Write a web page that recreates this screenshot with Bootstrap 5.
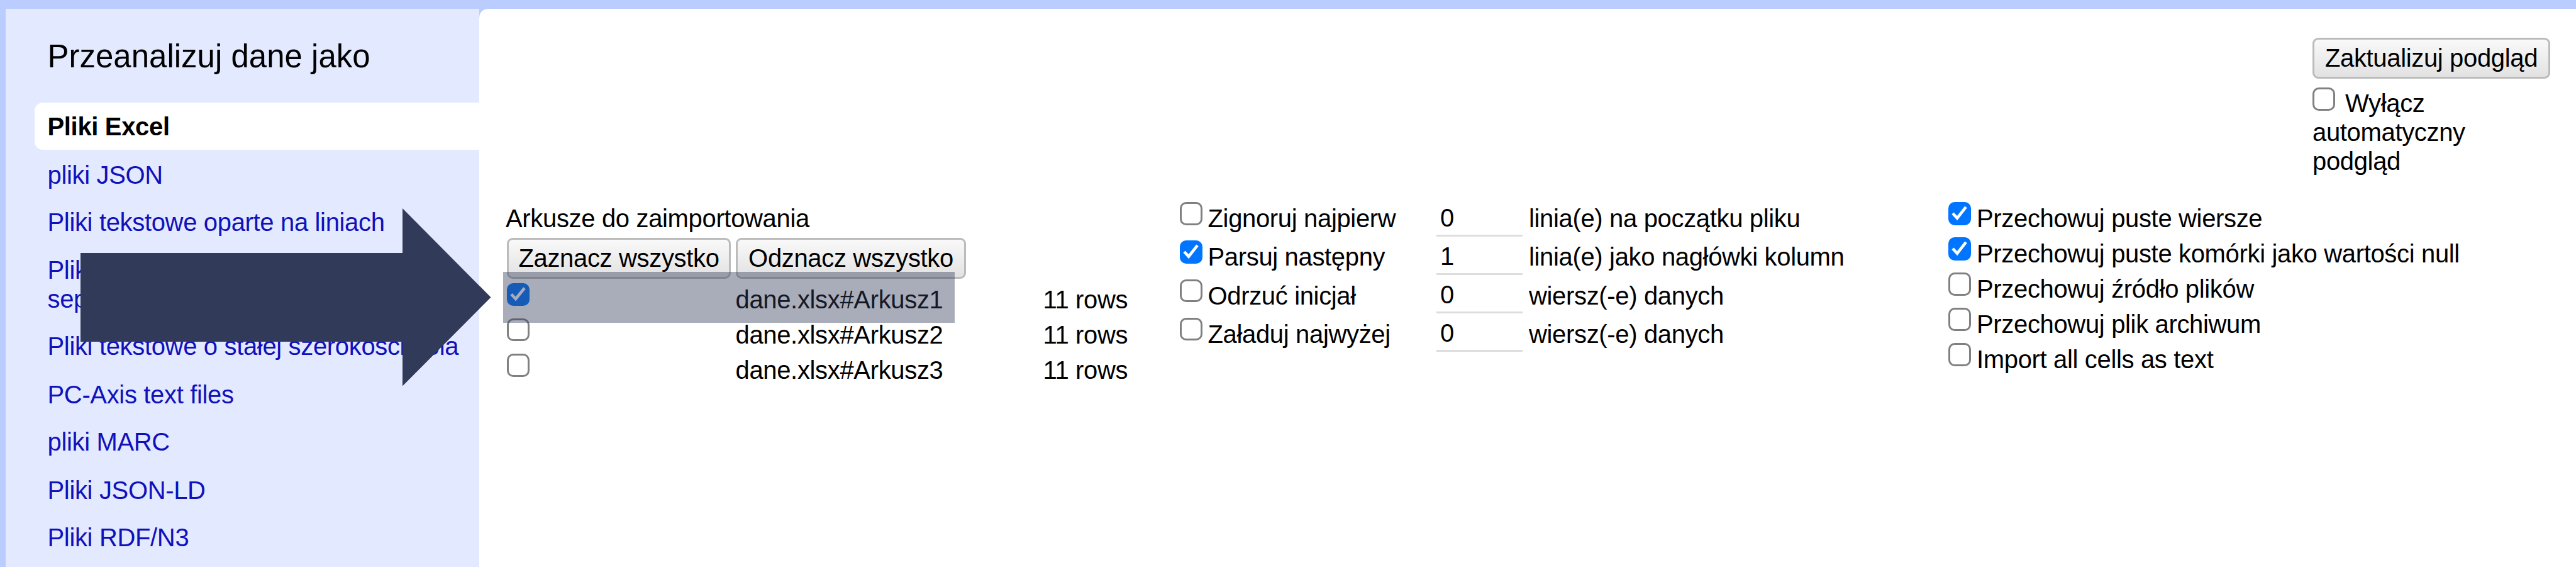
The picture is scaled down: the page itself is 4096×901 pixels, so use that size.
<!DOCTYPE html>
<html lang="pl">

<head>
    <meta charset="UTF-8">
    <meta name="viewport" content="width=device-width, initial-scale=1.0">
    <title>Importowanie danych</title>
    <link href="https://cdn.jsdelivr.net/npm/bootstrap@5.3.0/dist/css/bootstrap.min.css" rel="stylesheet">
    <style>
        body {
            font-family: "Liberation Sans", Arial, sans-serif;
            font-size: 40px;
            line-height: 46px;
            letter-spacing: -0.34px;
            color: #000;
            background-color: #bbccff;
        }

        .app-frame {
            height: 901px;
            padding: 14px 0 0 9px;
            background-color: #bbccff;
        }

        /* Left side: list of parsers */
        .format-panel {
            width: 753px;
            background-color: #e3e9ff;
        }

        .format-panel h1 {
            font-size: 51px;
            line-height: 58px;
            font-weight: 400;
            letter-spacing: 0;
            margin: 47px 0 44px 66.5px;
        }

        .format-list {
            margin-left: 46px;
        }

        .format-list .nav-link {
            color: #1111bb;
            padding: 14.5px 10px 14.5px 20.5px;
            border-radius: 13px 0 0 13px;
        }

        .format-list .nav-link.active {
            color: #000;
            font-weight: 700;
            background-color: #fff;
        }

        .format-list .nav-item:nth-child(odd) {
            margin-bottom: 2px;
        }

        .format-list .nav-item:nth-child(3) {
            margin-bottom: 1px;
        }

        /* Right side: import options */
        .options-panel {
            background-color: #fff;
            border-radius: 14px 0 0 0;
        }

        .preview-box {
            width: 419px;
            height: 307px;
            padding-top: 46px;
        }

        .preview-box label {
            width: 270px;
            margin-top: 14px;
        }

        .preview-box label span {
            position: relative;
            top: 2px;
        }

        .btn-gray {
            --bs-btn-color: #000;
            --bs-btn-font-size: 40px;
            --bs-btn-line-height: 46px;
            --bs-btn-border-width: 3px;
            --bs-btn-border-color: #bbb;
            --bs-btn-border-radius: 9px;
            --bs-btn-padding-x: 0;
            --bs-btn-padding-y: 0;
            height: 65px;
            padding-bottom: 1px;
            background-image: linear-gradient(#f9f9f9, #e2e2e2);
            letter-spacing: inherit;
        }

        .btn-update {
            width: 378px;
        }

        .btn-select {
            width: 356px;
        }

        .btn-deselect {
            width: 366px;
        }

        .form-check-input {
            flex: none;
            width: 36px;
            height: 36.5px;
            margin: 0;
            border: 3px solid #808080;
            border-radius: 7px;
        }

        .form-check-input:checked {
            background-color: #0075ff;
            border-color: #0075ff;
            background-origin: border-box;
            background-size: 100% 100%;
            background-image: url("data:image/svg+xml,%3csvg xmlns='http://www.w3.org/2000/svg' viewBox='0 0 36 36'%3e%3cpath fill='none' stroke='%23fff' stroke-width='4.6' d='M7 17.500l7 7.500L28 7.500'/%3e%3c/svg%3e");
        }

        .text-drop {
            margin-top: 3px;
        }

        .sheet-col {
            width: 1071.5px;
            margin-left: 42px;
        }

        .sheet-actions {
            margin: 8px 0 6.5px 2px;
        }

        .sheet-row {
            display: grid;
            grid-template-columns: 363.5px 489px auto;
            height: 56.3px;
            margin-left: 2px;
        }

        .limit-col {
            width: 1222px;
        }

        .limit-row {
            display: grid;
            grid-template-columns: 45px 363px 147.5px auto;
            height: 61.3px;
        }

        .limit-input {
            width: 137px;
            height: 54.5px;
            padding: 3px 6.5px 4.5px;
            border: 0;
            border-bottom: 3px solid #ddd;
            border-radius: 0;
            font-size: 40px;
            line-height: 46px;
            letter-spacing: inherit;
            color: #000;
        }

        .flag-row {
            height: 56px;
            gap: 9.5px;
        }

        /* Annotation over the screen: arrow and shaded row */
        .callout-arrow {
            left: 128px;
            top: 331px;
        }

        .callout-row {
            left: 800px;
            top: 432px;
            width: 718px;
            height: 81px;
            background-color: rgba(49, 58, 89, 0.42);
        }
    </style>
</head>

<body class="overflow-hidden">
    <div class="app-frame d-flex position-relative">
        <aside class="format-panel flex-shrink-0">
            <h1>Przeanalizuj dane jako</h1>
            <ul class="format-list nav flex-column flex-nowrap">
                <li class="nav-item"><a class="nav-link active" href="#">Pliki Excel</a></li>
                <li class="nav-item"><a class="nav-link" href="#">pliki JSON</a></li>
                <li class="nav-item"><a class="nav-link" href="#">Pliki tekstowe oparte na liniach</a></li>
                <li class="nav-item"><a class="nav-link" href="#">Pliki CSV / TSV / oparte na<br>separatorach</a></li>
                <li class="nav-item"><a class="nav-link text-nowrap" href="#">Pliki tekstowe o stałej szerokości pola</a></li>
                <li class="nav-item"><a class="nav-link" href="#">PC-Axis text files</a></li>
                <li class="nav-item"><a class="nav-link" href="#">pliki MARC</a></li>
                <li class="nav-item"><a class="nav-link" href="#">Pliki JSON-LD</a></li>
                <li class="nav-item"><a class="nav-link" href="#">Pliki RDF/N3</a></li>
            </ul>
        </aside>

        <main class="options-panel flex-grow-1">
            <div class="preview-box ms-auto">
                <button type="button" class="btn btn-gray btn-update d-block">Zaktualizuj podgląd</button>
                <label class="d-block"><input class="form-check-input float-none align-top me-3" type="checkbox"><span>Wyłącz automatyczny podgląd</span></label>
            </div>

            <div class="d-flex align-items-start">
                <section class="sheet-col">
                    <div class="text-drop">Arkusze do zaimportowania</div>
                    <div class="sheet-actions d-flex gap-2">
                        <button type="button" class="btn btn-gray btn-select">Zaznacz wszystko</button>
                        <button type="button" class="btn btn-gray btn-deselect">Odznacz wszystko</button>
                    </div>
                    <div class="sheet-row">
                        <input class="form-check-input" type="checkbox" checked>
                        <span class="text-drop">dane.xlsx#Arkusz1</span>
                        <span class="text-drop">11 rows</span>
                    </div>
                    <div class="sheet-row">
                        <input class="form-check-input" type="checkbox">
                        <span class="text-drop">dane.xlsx#Arkusz2</span>
                        <span class="text-drop">11 rows</span>
                    </div>
                    <div class="sheet-row">
                        <input class="form-check-input" type="checkbox">
                        <span class="text-drop">dane.xlsx#Arkusz3</span>
                        <span class="text-drop">11 rows</span>
                    </div>
                </section>

                <section class="limit-col">
                    <div class="limit-row">
                        <input class="form-check-input" type="checkbox">
                        <span class="text-drop">Zignoruj najpierw</span>
                        <input class="limit-input" type="text" value="0">
                        <span class="text-drop">linia(e) na początku pliku</span>
                    </div>
                    <div class="limit-row">
                        <input class="form-check-input" type="checkbox" checked>
                        <span class="text-drop">Parsuj następny</span>
                        <input class="limit-input" type="text" value="1">
                        <span class="text-drop">linia(e) jako nagłówki kolumn</span>
                    </div>
                    <div class="limit-row">
                        <input class="form-check-input" type="checkbox">
                        <span class="text-drop">Odrzuć inicjał</span>
                        <input class="limit-input" type="text" value="0">
                        <span class="text-drop">wiersz(-e) danych</span>
                    </div>
                    <div class="limit-row">
                        <input class="form-check-input" type="checkbox">
                        <span class="text-drop">Załaduj najwyżej</span>
                        <input class="limit-input" type="text" value="0">
                        <span class="text-drop">wiersz(-e) danych</span>
                    </div>
                </section>

                <section class="flag-col">
                    <label class="flag-row d-flex">
                        <input class="form-check-input" type="checkbox" checked>
                        <span class="text-drop">Przechowuj puste wiersze</span>
                    </label>
                    <label class="flag-row d-flex">
                        <input class="form-check-input" type="checkbox" checked>
                        <span class="text-drop">Przechowuj puste komórki jako wartości null</span>
                    </label>
                    <label class="flag-row d-flex">
                        <input class="form-check-input" type="checkbox">
                        <span class="text-drop">Przechowuj źródło plików</span>
                    </label>
                    <label class="flag-row d-flex">
                        <input class="form-check-input" type="checkbox">
                        <span class="text-drop">Przechowuj plik archiwum</span>
                    </label>
                    <label class="flag-row d-flex">
                        <input class="form-check-input" type="checkbox">
                        <span class="text-drop">Import all cells as text</span>
                    </label>
                </section>
            </div>
        </main>

        <svg class="callout-arrow position-absolute" width="653" height="283" viewBox="0 0 653 283">
            <path fill="#313a59" d="M0 71H512V0L652.500 141.500L512 282.500V212H0z" />
        </svg>
        <div class="callout-row position-absolute"></div>
    </div>

    <script src="https://cdn.jsdelivr.net/npm/bootstrap@5.3.0/dist/js/bootstrap.bundle.min.js"></script>
</body>

</html>
